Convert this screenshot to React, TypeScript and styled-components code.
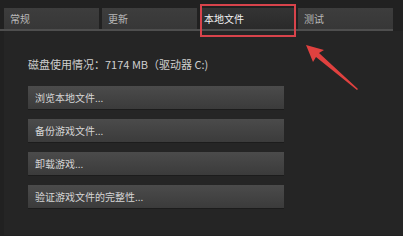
import React from 'react';
import styled, { createGlobalStyle } from 'styled-components';

const GlobalStyle = createGlobalStyle`
  html, body {
    margin: 0;
    padding: 0;
    background: #212121;
  }
  body {
    font-family: "Noto Sans CJK SC", "Liberation Sans", sans-serif;
    -webkit-font-smoothing: antialiased;
  }
`;

const Window = styled.div`
  position: relative;
  width: 403px;
  height: 236px;
  overflow: hidden;
  background: #212121;
`;

const TabBar = styled.div`
  display: flex;
  gap: 3px;
  padding: 8px 0 0 4px;
  width: 393px;
  box-sizing: border-box;
  border-bottom: 2px solid #4e4e4e;
`;

const Tab = styled.div<{ $active?: boolean }>`
  position: relative;
  width: 96px;
  height: 21px;
  box-sizing: border-box;
  padding-left: ${(p) => (p.$active ? '4px' : '6px')};
  display: flex;
  align-items: center;
  font-size: 10px;
  color: ${(p) => (p.$active ? '#f2f2f2' : '#b9b9b9')};
  background: ${(p) =>
    p.$active
      ? 'linear-gradient(#343434, #2a2a2a)'
      : 'linear-gradient(#3d3d3d, #373737)'};
`;

const Highlight = styled.span`
  position: absolute;
  top: -4px;
  left: 0;
  right: -1px;
  bottom: -8px;
  border: 2px solid #d8434b;
  pointer-events: none;
`;

const Panel = styled.div`
  margin-left: 4px;
  height: 204px;
  background: #252525;
  padding: 26px 0 0 24px;
  box-sizing: border-box;
`;

const Usage = styled.div`
  font-size: 11px;
  color: #cfcfcf;
  line-height: 14px;
  margin-bottom: 15px;
`;

const ButtonList = styled.div`
  display: flex;
  flex-direction: column;
  gap: 10px;
  width: 256px;
`;

const ActionButton = styled.div`
  height: 23px;
  display: flex;
  align-items: center;
  padding-left: 7px;
  font-size: 10px;
  color: #d6d6d6;
  background: linear-gradient(#4b4b4b, #3b3b3b);
  box-shadow: 0 1px 0 #1c1c1c;
`;

const Arrow = styled.svg`
  position: absolute;
  left: 300px;
  top: 40px;
`;

const tabs = ['常规', '更新', '本地文件', '测试'];
const actions = ['浏览本地文件...', '备份游戏文件...', '卸载游戏...', '验证游戏文件的完整性...'];

export default function App() {
  return (
    <Window>
      <GlobalStyle />
      <TabBar>
        {tabs.map((t, i) => (
          <Tab key={t} $active={i === 2}>
            {t}
            {i === 2 && <Highlight />}
          </Tab>
        ))}
      </TabBar>
      <Panel>
        <Usage>磁盘使用情况：7174 MB（驱动器 C:)</Usage>
        <ButtonList>
          {actions.map((a) => (
            <ActionButton key={a}>{a}</ActionButton>
          ))}
        </ButtonList>
      </Panel>
      <Arrow width="65" height="55" viewBox="0 0 65 55">
        <polygon points="6,5 24,10 19,13 58,49 57,50 16,17 13,22" fill="#e0413f" />
      </Arrow>
    </Window>
  );
}
